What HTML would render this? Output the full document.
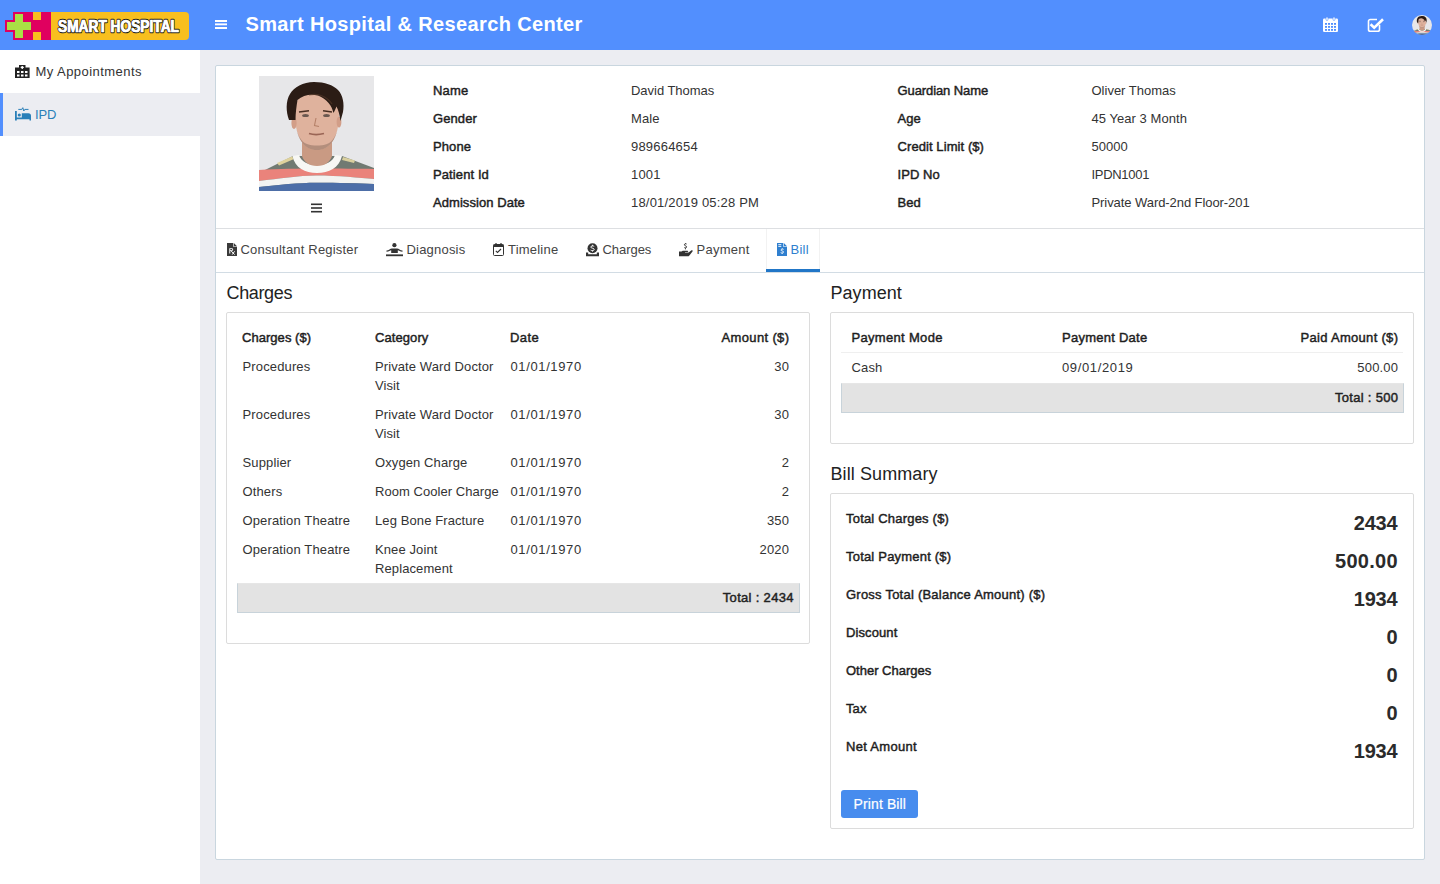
<!DOCTYPE html>
<html><head><meta charset="utf-8"><style>
html,body{margin:0;padding:0;width:1440px;height:884px;overflow:hidden;font-family:"Liberation Sans", sans-serif;}
.t{position:absolute;white-space:nowrap;}
</style></head><body>
<div style="position:absolute;left:0px;top:0px;width:1440px;height:884px;background:#ecedf2"></div><div style="position:absolute;left:0px;top:0px;width:1440px;height:50px;background:#528ffe"></div><div style="position:absolute;left:0px;top:50px;width:200px;height:834px;background:#fff"></div><div style="position:absolute;left:0px;top:93px;width:200px;height:43px;background:#ecedf2"></div><div style="position:absolute;left:0px;top:93px;width:3px;height:43px;background:#528ffe"></div><svg style="position:absolute;left:0;top:0" width="200" height="50" viewBox="0 0 200 50">
<path d="M51 12H185a4 4 0 0 1 4 4V36a4 4 0 0 1 -4 4H51z" fill="#f8bf1e"/>
<path d="M13 12H51V40H13V32H5V20H13z" fill="#e0005f"/>
<rect x="33" y="12" width="8" height="8" fill="#f8bf1e"/>
<rect x="33" y="32" width="8" height="8" fill="#f8bf1e"/>
<path d="M15 14H23V22H31V30H23V38H15V30H7V22H15z" fill="#a9e045"/>
<text x="58" y="32" font-family="Liberation Sans" font-weight="700" font-size="17" fill="#fff" stroke="#1a1a1a" stroke-width="2.6" stroke-linejoin="round" paint-order="stroke" textLength="121" lengthAdjust="spacingAndGlyphs">SMART HOSPITAL</text>
<text x="58" y="32" font-family="Liberation Sans" font-weight="700" font-size="17" fill="#fff" stroke="#fff" stroke-width="0.7" textLength="121" lengthAdjust="spacingAndGlyphs">SMART HOSPITAL</text>
</svg><svg style="position:absolute;left:215px;top:20px" width="12" height="10" viewBox="0 0 12 10"><rect x="0" y="0" width="12" height="2" fill="#fff"/><rect x="0" y="3.4" width="12" height="1.9" fill="#fff"/><rect x="0" y="7" width="12" height="2" fill="#fff"/></svg><div class="t" style="left:245.5px;top:12px;font-size:20px;line-height:24px;font-weight:700;color:#fff;letter-spacing:0.36px;">Smart Hospital &amp; Research Center</div><svg style="position:absolute;left:1323px;top:17px" width="15" height="15" viewBox="0 0 15 15">
<rect x="0" y="1.5" width="15" height="13.5" rx="1.2" fill="#fff"/>
<rect x="3" y="0" width="2" height="3.5" rx="1" fill="#fff" stroke="#528ffe" stroke-width="0.6"/>
<rect x="10" y="0" width="2" height="3.5" rx="1" fill="#fff" stroke="#528ffe" stroke-width="0.6"/>
<g fill="#528ffe">
<rect x="2" y="6" width="2" height="1.8"/><rect x="5" y="6" width="2" height="1.8"/><rect x="8" y="6" width="2" height="1.8"/><rect x="11" y="6" width="2" height="1.8"/>
<rect x="2" y="9" width="2" height="1.8"/><rect x="5" y="9" width="2" height="1.8"/><rect x="8" y="9" width="2" height="1.8"/><rect x="11" y="9" width="2" height="1.8"/>
<rect x="2" y="12" width="2" height="1.8"/><rect x="5" y="12" width="2" height="1.8"/><rect x="8" y="12" width="2" height="1.8"/><rect x="11" y="12" width="2" height="1.8"/>
</g></svg><svg style="position:absolute;left:1367px;top:17px" width="18" height="16" viewBox="0 0 18 16">
<path d="M12.5 7.8V12.5a1.8 1.8 0 0 1 -1.8 1.8H3.3a1.8 1.8 0 0 1 -1.8 -1.8V4.3a1.8 1.8 0 0 1 1.8 -1.8H10" fill="none" stroke="#fff" stroke-width="1.6"/>
<path d="M3.6 7.2L7.2 10.6L16 2.2" fill="none" stroke="#fff" stroke-width="2.6"/>
</svg><div style="position:absolute;left:1412px;top:14.5px;width:20px;height:20px;border-radius:50%;overflow:hidden"><svg width="20" height="20" viewBox="0 0 115 115" style="display:block">
<rect width="115" height="115" fill="#e7e7e9"/>
<path d="M0 97L34 80L83 80L115 92V115H0z" fill="#717a72"/>
<path d="M18 87L33 80.5L35 83L20 89.5z" fill="#dfd29c"/>
<path d="M84 81L96 84.5L95 87L83 84z" fill="#d9cf9e"/>
<path d="M0 94C20 93 40 92.6 57 92.6C80 92.6 100 92.8 115 93V103C100 102 80 99.6 57 99.6C40 99.6 20 103 0 105z" fill="#ea837b"/>
<path d="M0 105C20 103 40 99.6 57 99.6C80 99.6 100 102 115 103V108C100 107.5 80 106.8 57 106.8C40 106.8 20 109 0 111z" fill="#f3f3f1"/>
<path d="M0 111C20 109 40 106.8 57 106.8C80 106.8 100 107.5 115 108V115H0z" fill="#4d6ea7"/>
<path d="M33.5 80C36 92 46 97 58 97C70 97 80 92 83 80L76 79C74 86 66 89 58 89C50 89 42 86 40 79z" fill="#f7f7f4"/>
<path d="M43 60V80C45 86 50 90 58 90C66 90 71 86 73 80V60z" fill="#c99a83"/>
<path d="M36 38C36 20 45 13 58 13C71 13 80 20 80 38C80 60 72 74 58 74C44 74 36 60 36 38z" fill="#dfb29d"/>
<path d="M37 50C39 64 46 74 58 74C70 74 77 64 79 50C78 58 74 66 68 68C62 70 54 70 48 68C42 66 38 58 37 50z" fill="#a88474" opacity="0.8"/>
<ellipse cx="35" cy="47" rx="2.6" ry="6" fill="#d29e88"/>
<ellipse cx="80" cy="46" rx="2.4" ry="5.5" fill="#d29e88"/>
<path d="M30 44C27 36 26.5 25 31 18C35 11 44 6 55 6C66 6 74 9 79 14C84 19 85.5 28 84 36L81.5 45C80.5 39 79.5 34 77.5 30.5C76.5 33 75.5 35 74.5 37C73 30 68 23 59 19.5C52 17.5 44 19 38.5 24C37.5 30 36.5 37 36.5 44z" fill="#2b1c15"/><path d="M50 19C58 17 68 20 73 28" stroke="#5a3c2c" stroke-width="1.2" fill="none" opacity="0.6"/>
<path d="M40 36L50 34.8M64 34.8L73 36" stroke="#4a3024" stroke-width="1.6"/>
<ellipse cx="46.5" cy="39.5" rx="3.4" ry="1.6" fill="#6a5850"/>
<ellipse cx="67.5" cy="39.5" rx="3.4" ry="1.6" fill="#6a5850"/>
<path d="M57 42L55.5 49.5L60 50.5" stroke="#b58068" stroke-width="1.1" fill="none"/>
<path d="M50 57.5C54 58.8 60 58.8 65 57.5" stroke="#9a6555" stroke-width="1.6" fill="none"/>
</svg></div><svg style="position:absolute;left:15px;top:64.5px" width="15" height="13" viewBox="0 0 15 13">
<path d="M4 0H10.5V2.5H14.6V13H0V2.5H4z" fill="#222"/>
<path d="M6.6 0.9H7.9V1.8H8.8V3H7.9V3.9H6.6V3H5.7V1.8H6.6z" fill="#fff"/>
<g fill="#fff"><rect x="2" y="6" width="2.5" height="2"/><rect x="6" y="6" width="2.5" height="2"/><rect x="10" y="6" width="2.5" height="2"/>
<rect x="2" y="9.5" width="2.5" height="2"/><rect x="6" y="9.5" width="2.5" height="2"/><rect x="10" y="9.5" width="2.5" height="2"/></g>
</svg><div class="t" style="left:35.5px;top:64px;font-size:13px;line-height:16px;font-weight:400;color:#333;letter-spacing:0.45px;">My Appointments</div><svg style="position:absolute;left:15px;top:107px" width="17" height="14" viewBox="0 0 17 14">
<path fill="#2a7fb8" d="M0 4H1.8V10.4H6.8V6.2H13.4a2.6 2.6 0 0 1 2.6 2.6V13.6H14.5V12.3H1.8V13.6H0z"/>
<circle cx="4.3" cy="8" r="1.6" fill="#2a7fb8"/>
<path d="M3.3 2.4H6.8L7.8 0.7L8.8 4L9.8 2.4H13.5" stroke="#2a7fb8" stroke-width="1" fill="none"/>
</svg><div class="t" style="left:35px;top:107px;font-size:13px;line-height:16px;font-weight:400;color:#2a7fb8;letter-spacing:-0.2px;">IPD</div><div style="position:absolute;left:215px;top:65px;width:1210px;height:795px;background:#fff;border:1px solid #c9d6df;border-radius:2px;box-sizing:border-box"></div><svg style="position:absolute;left:259px;top:76px" width="115" height="115" viewBox="0 0 115 115">
<rect width="115" height="115" fill="#e7e7e9"/>
<path d="M0 97L34 80L83 80L115 92V115H0z" fill="#717a72"/>
<path d="M18 87L33 80.5L35 83L20 89.5z" fill="#dfd29c"/>
<path d="M84 81L96 84.5L95 87L83 84z" fill="#d9cf9e"/>
<path d="M0 94C20 93 40 92.6 57 92.6C80 92.6 100 92.8 115 93V103C100 102 80 99.6 57 99.6C40 99.6 20 103 0 105z" fill="#ea837b"/>
<path d="M0 105C20 103 40 99.6 57 99.6C80 99.6 100 102 115 103V108C100 107.5 80 106.8 57 106.8C40 106.8 20 109 0 111z" fill="#f3f3f1"/>
<path d="M0 111C20 109 40 106.8 57 106.8C80 106.8 100 107.5 115 108V115H0z" fill="#4d6ea7"/>
<path d="M33.5 80C36 92 46 97 58 97C70 97 80 92 83 80L76 79C74 86 66 89 58 89C50 89 42 86 40 79z" fill="#f7f7f4"/>
<path d="M43 60V80C45 86 50 90 58 90C66 90 71 86 73 80V60z" fill="#c99a83"/>
<path d="M36 38C36 20 45 13 58 13C71 13 80 20 80 38C80 60 72 74 58 74C44 74 36 60 36 38z" fill="#dfb29d"/>
<path d="M37 50C39 64 46 74 58 74C70 74 77 64 79 50C78 58 74 66 68 68C62 70 54 70 48 68C42 66 38 58 37 50z" fill="#a88474" opacity="0.8"/>
<ellipse cx="35" cy="47" rx="2.6" ry="6" fill="#d29e88"/>
<ellipse cx="80" cy="46" rx="2.4" ry="5.5" fill="#d29e88"/>
<path d="M30 44C27 36 26.5 25 31 18C35 11 44 6 55 6C66 6 74 9 79 14C84 19 85.5 28 84 36L81.5 45C80.5 39 79.5 34 77.5 30.5C76.5 33 75.5 35 74.5 37C73 30 68 23 59 19.5C52 17.5 44 19 38.5 24C37.5 30 36.5 37 36.5 44z" fill="#2b1c15"/><path d="M50 19C58 17 68 20 73 28" stroke="#5a3c2c" stroke-width="1.2" fill="none" opacity="0.6"/>
<path d="M40 36L50 34.8M64 34.8L73 36" stroke="#4a3024" stroke-width="1.6"/>
<ellipse cx="46.5" cy="39.5" rx="3.4" ry="1.6" fill="#6a5850"/>
<ellipse cx="67.5" cy="39.5" rx="3.4" ry="1.6" fill="#6a5850"/>
<path d="M57 42L55.5 49.5L60 50.5" stroke="#b58068" stroke-width="1.1" fill="none"/>
<path d="M50 57.5C54 58.8 60 58.8 65 57.5" stroke="#9a6555" stroke-width="1.6" fill="none"/>
</svg><svg style="position:absolute;left:311px;top:203px" width="11" height="10" viewBox="0 0 11 10"><g fill="#333"><rect y="0.5" width="11" height="1.6"/><rect y="4.2" width="11" height="1.6"/><rect y="7.9" width="11" height="1.6"/></g></svg><div class="t" style="left:433px;top:83px;font-size:13px;line-height:16px;font-weight:400;color:#1e1e1e;letter-spacing:0.18px;-webkit-text-stroke:0.45px currentColor;">Name</div><div class="t" style="left:631px;top:83px;font-size:13px;line-height:16px;font-weight:400;color:#333;letter-spacing:-0.03px;">David Thomas</div><div class="t" style="left:433px;top:111px;font-size:13px;line-height:16px;font-weight:400;color:#1e1e1e;letter-spacing:0.1px;-webkit-text-stroke:0.45px currentColor;">Gender</div><div class="t" style="left:631px;top:111px;font-size:13px;line-height:16px;font-weight:400;color:#333;letter-spacing:0.1px;">Male</div><div class="t" style="left:433px;top:139px;font-size:13px;line-height:16px;font-weight:400;color:#1e1e1e;letter-spacing:0.1px;-webkit-text-stroke:0.45px currentColor;">Phone</div><div class="t" style="left:631px;top:139px;font-size:13px;line-height:16px;font-weight:400;color:#333;letter-spacing:0.2px;">989664654</div><div class="t" style="left:433px;top:167px;font-size:13px;line-height:16px;font-weight:400;color:#1e1e1e;letter-spacing:0.1px;-webkit-text-stroke:0.45px currentColor;">Patient Id</div><div class="t" style="left:631px;top:167px;font-size:13px;line-height:16px;font-weight:400;color:#333;letter-spacing:0.2px;">1001</div><div class="t" style="left:433px;top:195px;font-size:13px;line-height:16px;font-weight:400;color:#1e1e1e;letter-spacing:0.06px;-webkit-text-stroke:0.45px currentColor;">Admission Date</div><div class="t" style="left:631px;top:195px;font-size:13px;line-height:16px;font-weight:400;color:#333;letter-spacing:0.2px;">18/01/2019 05:28 PM</div><div class="t" style="left:897.5px;top:83px;font-size:13px;line-height:16px;font-weight:400;color:#1e1e1e;letter-spacing:-0.09px;-webkit-text-stroke:0.45px currentColor;">Guardian Name</div><div class="t" style="left:1091.5px;top:83px;font-size:13px;line-height:16px;font-weight:400;color:#333;">Oliver Thomas</div><div class="t" style="left:897.5px;top:111px;font-size:13px;line-height:16px;font-weight:400;color:#1e1e1e;letter-spacing:0.05px;-webkit-text-stroke:0.45px currentColor;">Age</div><div class="t" style="left:1091.5px;top:111px;font-size:13px;line-height:16px;font-weight:400;color:#333;letter-spacing:0.05px;">45 Year 3 Month</div><div class="t" style="left:897.5px;top:139px;font-size:13px;line-height:16px;font-weight:400;color:#1e1e1e;letter-spacing:0.08px;-webkit-text-stroke:0.45px currentColor;">Credit Limit ($)</div><div class="t" style="left:1091.5px;top:139px;font-size:13px;line-height:16px;font-weight:400;color:#333;">50000</div><div class="t" style="left:897.5px;top:167px;font-size:13px;line-height:16px;font-weight:400;color:#1e1e1e;letter-spacing:0.05px;-webkit-text-stroke:0.45px currentColor;">IPD No</div><div class="t" style="left:1091.5px;top:167px;font-size:13px;line-height:16px;font-weight:400;color:#333;letter-spacing:-0.3px;">IPDN1001</div><div class="t" style="left:897.5px;top:195px;font-size:13px;line-height:16px;font-weight:400;color:#1e1e1e;letter-spacing:0.05px;-webkit-text-stroke:0.45px currentColor;">Bed</div><div class="t" style="left:1091.5px;top:195px;font-size:13px;line-height:16px;font-weight:400;color:#333;letter-spacing:-0.07px;">Private Ward-2nd Floor-201</div><div style="position:absolute;left:216px;top:228px;width:1208px;height:1px;background:#dddfe2"></div><div style="position:absolute;left:216px;top:272px;width:1208px;height:1px;background:#d2dce4"></div><div style="position:absolute;left:766px;top:229px;width:1px;height:41px;background:#f2f2f2"></div><div style="position:absolute;left:819px;top:229px;width:1px;height:41px;background:#f2f2f2"></div><div style="position:absolute;left:766px;top:269px;width:54px;height:3px;background:#2176c7"></div><div class="t" style="left:240.5px;top:242px;font-size:13px;line-height:16px;font-weight:400;color:#444;letter-spacing:0.19px;">Consultant Register</div><div class="t" style="left:406.5px;top:242px;font-size:13px;line-height:16px;font-weight:400;color:#444;letter-spacing:0.2px;">Diagnosis</div><div class="t" style="left:508px;top:242px;font-size:13px;line-height:16px;font-weight:400;color:#444;letter-spacing:0.21px;">Timeline</div><div class="t" style="left:602.5px;top:242px;font-size:13px;line-height:16px;font-weight:400;color:#444;letter-spacing:-0.05px;">Charges</div><div class="t" style="left:696.5px;top:242px;font-size:13px;line-height:16px;font-weight:400;color:#444;letter-spacing:0.25px;">Payment</div><div class="t" style="left:790.5px;top:242px;font-size:13px;line-height:16px;font-weight:400;color:#2f7fcf;letter-spacing:0.25px;">Bill</div>
<svg style="position:absolute;left:227px;top:242.5px" width="10" height="13" viewBox="0 0 10 13">
<path d="M0 0H6.2V3.8H10V13H0z" fill="#3a3a3a"/><path d="M6.8 0L10 3.2H6.8z" fill="#3a3a3a"/>
<path d="M2.3 5.2H4.8a1.4 1.4 0 0 1 0 2.8H3.3V10.5H2.3z M3.3 6V7.2H4.7a0.6 0.6 0 0 0 0 -1.2z" fill="#fff" fill-rule="evenodd"/>
<path d="M4.2 8L7.6 11.6M7.6 8.3L5.2 11.6" stroke="#fff" stroke-width="1"/>
</svg>
<svg style="position:absolute;left:386px;top:242.5px" width="17" height="14" viewBox="0 0 17 14">
<circle cx="8.4" cy="2.2" r="2.1" fill="#333"/>
<path d="M0.5 7.6C3 7.4 4 5.4 6 5.4H11C13 5.4 14 7.4 16.5 7.6V8.8C14 8.8 13 7.5 11.8 7.3V10H5.2V7.3C4 7.5 3 8.8 0.5 8.8z" fill="#333"/>
<rect x="0" y="11.4" width="17" height="1.8" fill="#333"/>
</svg>
<svg style="position:absolute;left:493px;top:242.5px" width="11" height="13" viewBox="0 0 11 13">
<rect x="0.5" y="1.5" width="10" height="11" rx="1" fill="none" stroke="#333" stroke-width="1"/>
<rect x="0.5" y="1.5" width="10" height="2.5" fill="#333"/>
<rect x="2.4" y="0" width="1.2" height="2" fill="#333"/><rect x="7.4" y="0" width="1.2" height="2" fill="#333"/>
<path d="M2.8 7.8L4.5 9.4L8 6" stroke="#333" stroke-width="1.1" fill="none"/>
</svg>
<svg style="position:absolute;left:586px;top:242.5px" width="13" height="14" viewBox="0 0 13 14">
<circle cx="6.5" cy="5.2" r="5" fill="#333"/>
<path d="M8.2 3.4C7.6 2.8 4.8 2.6 4.8 4.1C4.8 5.6 8.2 4.8 8.2 6.4C8.2 7.9 5.4 7.7 4.6 7.1M6.5 1.8V2.8M6.5 7.6V8.6" stroke="#fff" stroke-width="1" fill="none"/>
<path d="M0 9.5H2.2V11.3H10.8V9.5H13V13.2H0z" fill="#333"/>
</svg>
<svg style="position:absolute;left:679px;top:242.5px" width="14" height="14" viewBox="0 0 14 14">
<path d="M7.6 1C7 0.6 5.4 0.6 5.4 1.8C5.4 3 7.6 2.6 7.6 3.9C7.6 5.1 6 5 5.3 4.6M6.5 0V0.6M6.5 5.2V6.3" stroke="#333" stroke-width="1" fill="none"/>
<path d="M0 8.6H2.5L3.8 7.7H8.5C9.5 7.7 9.4 9.1 8.5 9.1H6V9.6H9.6L12.5 7.3C13.4 6.8 14.2 7.6 13.5 8.4L10.6 12.2C10.3 12.6 9.8 13.2 9 13.2H0z" fill="#333"/>
</svg>
<svg style="position:absolute;left:777px;top:242.5px" width="10" height="13" viewBox="0 0 10 13">
<path d="M0 0H6.2V3.8H10V13H0z" fill="#2f7fcf"/><path d="M6.8 0L10 3.2H6.8z" fill="#2f7fcf"/>
<rect x="1.3" y="1.2" width="3" height="0.9" fill="#fff"/><rect x="1.3" y="2.9" width="3" height="0.9" fill="#fff"/>
<path d="M6.6 6.4C6.2 6 4 5.9 4 7.1C4 8.2 6.6 7.8 6.6 9C6.6 10.2 4.3 10.1 3.7 9.6M5.2 5.3V6M5.2 10.1V11" stroke="#fff" stroke-width="0.9" fill="none"/>
</svg>
<div class="t" style="left:226.5px;top:282px;font-size:18px;line-height:22px;font-weight:400;color:#222;letter-spacing:-0.35px;">Charges</div><div style="position:absolute;left:226px;top:312px;width:584px;height:332px;border:1px solid #dcdcdc;border-radius:2px;box-sizing:border-box"></div><div class="t" style="left:242px;top:330px;font-size:13px;line-height:16px;font-weight:400;color:#1e1e1e;letter-spacing:0.04px;-webkit-text-stroke:0.45px currentColor;">Charges ($)</div><div class="t" style="left:375px;top:330px;font-size:13px;line-height:16px;font-weight:400;color:#1e1e1e;letter-spacing:0.08px;-webkit-text-stroke:0.45px currentColor;">Category</div><div class="t" style="left:510px;top:330px;font-size:13px;line-height:16px;font-weight:400;color:#1e1e1e;letter-spacing:0.4px;-webkit-text-stroke:0.45px currentColor;">Date</div><div class="t" style="right:650.65px;top:330px;font-size:13px;line-height:16px;font-weight:400;color:#1e1e1e;letter-spacing:0.35px;-webkit-text-stroke:0.45px currentColor;">Amount ($)</div><div class="t" style="left:242.5px;top:359px;font-size:13px;line-height:16px;font-weight:400;color:#333;letter-spacing:0.14px;">Procedures</div><div class="t" style="left:375px;top:359px;font-size:13px;line-height:16px;font-weight:400;color:#333;letter-spacing:0.1px;">Private Ward Doctor</div><div class="t" style="left:375px;top:378px;font-size:13px;line-height:16px;font-weight:400;color:#333;letter-spacing:0.1px;">Visit</div><div class="t" style="left:510.5px;top:359px;font-size:13px;line-height:16px;font-weight:400;color:#333;letter-spacing:0.62px;">01/01/1970</div><div class="t" style="right:650.8px;top:359px;font-size:13px;line-height:16px;font-weight:400;color:#333;letter-spacing:0.2px;">30</div><div class="t" style="left:242.5px;top:407px;font-size:13px;line-height:16px;font-weight:400;color:#333;letter-spacing:0.14px;">Procedures</div><div class="t" style="left:375px;top:407px;font-size:13px;line-height:16px;font-weight:400;color:#333;letter-spacing:0.1px;">Private Ward Doctor</div><div class="t" style="left:375px;top:426px;font-size:13px;line-height:16px;font-weight:400;color:#333;letter-spacing:0.1px;">Visit</div><div class="t" style="left:510.5px;top:407px;font-size:13px;line-height:16px;font-weight:400;color:#333;letter-spacing:0.62px;">01/01/1970</div><div class="t" style="right:650.8px;top:407px;font-size:13px;line-height:16px;font-weight:400;color:#333;letter-spacing:0.2px;">30</div><div class="t" style="left:242.5px;top:455px;font-size:13px;line-height:16px;font-weight:400;color:#333;letter-spacing:0.14px;">Supplier</div><div class="t" style="left:375px;top:455px;font-size:13px;line-height:16px;font-weight:400;color:#333;letter-spacing:0.1px;">Oxygen Charge</div><div class="t" style="left:510.5px;top:455px;font-size:13px;line-height:16px;font-weight:400;color:#333;letter-spacing:0.62px;">01/01/1970</div><div class="t" style="right:650.8px;top:455px;font-size:13px;line-height:16px;font-weight:400;color:#333;letter-spacing:0.2px;">2</div><div class="t" style="left:242.5px;top:484px;font-size:13px;line-height:16px;font-weight:400;color:#333;letter-spacing:0.14px;">Others</div><div class="t" style="left:375px;top:484px;font-size:13px;line-height:16px;font-weight:400;color:#333;letter-spacing:0.05px;">Room Cooler Charge</div><div class="t" style="left:510.5px;top:484px;font-size:13px;line-height:16px;font-weight:400;color:#333;letter-spacing:0.62px;">01/01/1970</div><div class="t" style="right:650.8px;top:484px;font-size:13px;line-height:16px;font-weight:400;color:#333;letter-spacing:0.2px;">2</div><div class="t" style="left:242.5px;top:513px;font-size:13px;line-height:16px;font-weight:400;color:#333;letter-spacing:0.14px;">Operation Theatre</div><div class="t" style="left:375px;top:513px;font-size:13px;line-height:16px;font-weight:400;color:#333;letter-spacing:0.1px;">Leg Bone Fracture</div><div class="t" style="left:510.5px;top:513px;font-size:13px;line-height:16px;font-weight:400;color:#333;letter-spacing:0.62px;">01/01/1970</div><div class="t" style="right:650.8px;top:513px;font-size:13px;line-height:16px;font-weight:400;color:#333;letter-spacing:0.2px;">350</div><div class="t" style="left:242.5px;top:542px;font-size:13px;line-height:16px;font-weight:400;color:#333;letter-spacing:0.14px;">Operation Theatre</div><div class="t" style="left:375px;top:542px;font-size:13px;line-height:16px;font-weight:400;color:#333;letter-spacing:0.1px;">Knee Joint</div><div class="t" style="left:375px;top:561px;font-size:13px;line-height:16px;font-weight:400;color:#333;letter-spacing:0.1px;">Replacement</div><div class="t" style="left:510.5px;top:542px;font-size:13px;line-height:16px;font-weight:400;color:#333;letter-spacing:0.62px;">01/01/1970</div><div class="t" style="right:650.8px;top:542px;font-size:13px;line-height:16px;font-weight:400;color:#333;letter-spacing:0.2px;">2020</div><div style="position:absolute;left:237px;top:583px;width:563px;height:30px;background:#e3e3e3;border:1px solid #c8d3da;border-top-color:#e6e6e6;box-sizing:border-box"></div><div class="t" style="right:646.18px;top:590px;font-size:13px;line-height:16px;font-weight:400;color:#222;letter-spacing:0.32px;-webkit-text-stroke:0.45px currentColor;">Total : 2434</div><div class="t" style="left:830.5px;top:282px;font-size:18px;line-height:22px;font-weight:400;color:#222;letter-spacing:0.04px;">Payment</div><div style="position:absolute;left:830px;top:312px;width:584px;height:132px;border:1px solid #dcdcdc;border-radius:2px;box-sizing:border-box"></div><div class="t" style="left:851.5px;top:330px;font-size:13px;line-height:16px;font-weight:400;color:#1e1e1e;letter-spacing:0.32px;-webkit-text-stroke:0.45px currentColor;">Payment Mode</div><div class="t" style="left:1062px;top:330px;font-size:13px;line-height:16px;font-weight:400;color:#1e1e1e;letter-spacing:0.25px;-webkit-text-stroke:0.45px currentColor;">Payment Date</div><div class="t" style="right:41.69px;top:330px;font-size:13px;line-height:16px;font-weight:400;color:#1e1e1e;letter-spacing:0.31px;-webkit-text-stroke:0.45px currentColor;">Paid Amount ($)</div><div style="position:absolute;left:841px;top:352px;width:562px;height:1px;background:#efefef"></div><div class="t" style="left:851.5px;top:360px;font-size:13px;line-height:16px;font-weight:400;color:#333;letter-spacing:0.15px;">Cash</div><div class="t" style="left:1062px;top:360px;font-size:13px;line-height:16px;font-weight:400;color:#333;letter-spacing:0.64px;">09/01/2019</div><div class="t" style="right:41.81px;top:360px;font-size:13px;line-height:16px;font-weight:400;color:#333;letter-spacing:0.19px;">500.00</div><div style="position:absolute;left:841px;top:383px;width:563px;height:30px;background:#e3e3e3;border:1px solid #c8d3da;border-top-color:#e6e6e6;box-sizing:border-box"></div><div class="t" style="right:41.69px;top:390px;font-size:13px;line-height:16px;font-weight:400;color:#222;letter-spacing:0.31px;-webkit-text-stroke:0.45px currentColor;">Total : 500</div><div class="t" style="left:830.5px;top:463px;font-size:18px;line-height:22px;font-weight:400;color:#222;letter-spacing:0.09px;">Bill Summary</div><div style="position:absolute;left:830px;top:493px;width:584px;height:336px;border:1px solid #dcdcdc;border-radius:2px;box-sizing:border-box"></div><div class="t" style="left:846px;top:511px;font-size:13px;line-height:16px;font-weight:400;color:#1e1e1e;letter-spacing:0.2px;-webkit-text-stroke:0.45px currentColor;">Total Charges ($)</div><div class="t" style="right:42.76px;top:511px;font-size:20px;line-height:24px;font-weight:700;color:#2b2b2b;letter-spacing:-0.26px;">2434</div><div class="t" style="left:846px;top:549px;font-size:13px;line-height:16px;font-weight:400;color:#1e1e1e;letter-spacing:0.2px;-webkit-text-stroke:0.45px currentColor;">Total Payment ($)</div><div class="t" style="right:42.23px;top:549px;font-size:20px;line-height:24px;font-weight:700;color:#2b2b2b;letter-spacing:0.27px;">500.00</div><div class="t" style="left:846px;top:587px;font-size:13px;line-height:16px;font-weight:400;color:#1e1e1e;letter-spacing:0.23px;-webkit-text-stroke:0.45px currentColor;">Gross Total (Balance Amount) ($)</div><div class="t" style="right:42.76px;top:587px;font-size:20px;line-height:24px;font-weight:700;color:#2b2b2b;letter-spacing:-0.26px;">1934</div><div class="t" style="left:846px;top:625px;font-size:13px;line-height:16px;font-weight:400;color:#1e1e1e;letter-spacing:0.1px;-webkit-text-stroke:0.45px currentColor;">Discount</div><div class="t" style="right:42.5px;top:625px;font-size:20px;line-height:24px;font-weight:700;color:#2b2b2b;">0</div><div class="t" style="left:846px;top:663px;font-size:13px;line-height:16px;font-weight:400;color:#1e1e1e;-webkit-text-stroke:0.45px currentColor;">Other Charges</div><div class="t" style="right:42.5px;top:663px;font-size:20px;line-height:24px;font-weight:700;color:#2b2b2b;">0</div><div class="t" style="left:846px;top:701px;font-size:13px;line-height:16px;font-weight:400;color:#1e1e1e;letter-spacing:0.1px;-webkit-text-stroke:0.45px currentColor;">Tax</div><div class="t" style="right:42.5px;top:701px;font-size:20px;line-height:24px;font-weight:700;color:#2b2b2b;">0</div><div class="t" style="left:846px;top:739px;font-size:13px;line-height:16px;font-weight:400;color:#1e1e1e;letter-spacing:0.3px;-webkit-text-stroke:0.45px currentColor;">Net Amount</div><div class="t" style="right:42.76px;top:739px;font-size:20px;line-height:24px;font-weight:700;color:#2b2b2b;letter-spacing:-0.26px;">1934</div><div style="position:absolute;left:841px;top:790px;width:77px;height:28px;background:#478cee;border-radius:3px"></div><div class="t" style="left:853.5px;top:796px;font-size:14px;line-height:17px;font-weight:400;color:#fff;letter-spacing:0.12px;-webkit-text-stroke:0.2px #fff;">Print Bill</div>
</body></html>
